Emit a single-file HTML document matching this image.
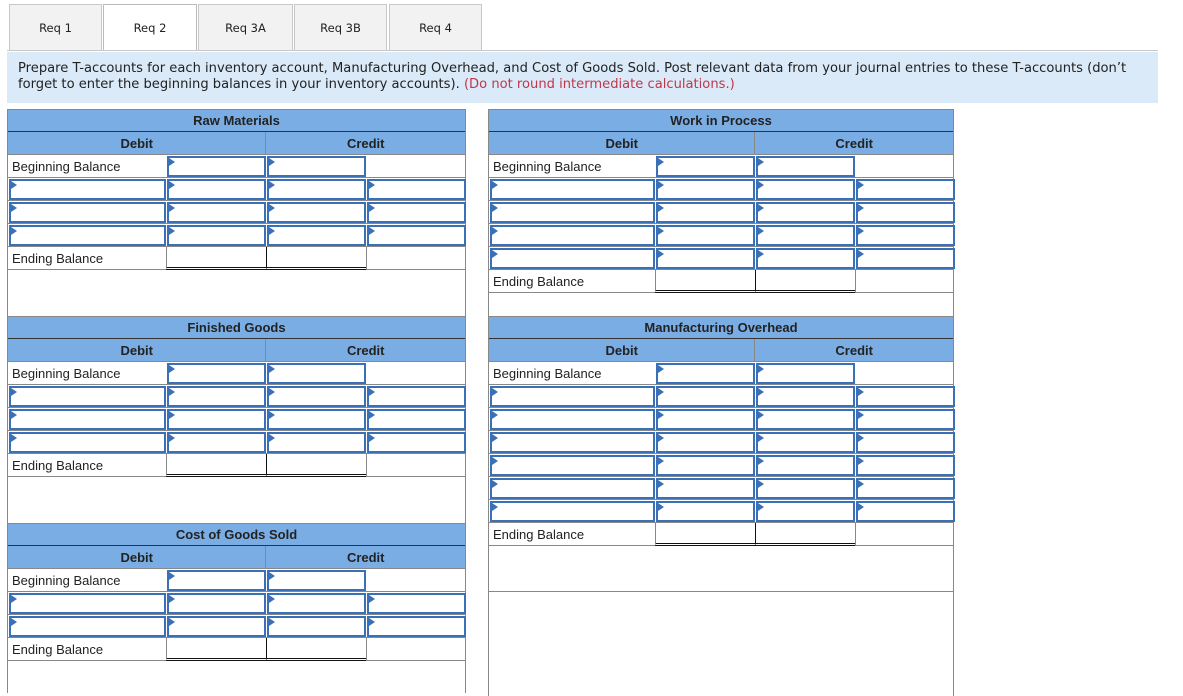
<!DOCTYPE html>
<html><head><meta charset="utf-8"><style>
*{box-sizing:border-box;margin:0;padding:0}
body{width:1183px;height:683px;background:#fff;position:relative;overflow:hidden;font-family:"Liberation Sans",Arial,sans-serif;color:#222}
.tab{position:absolute;top:4px;height:47px;background:#f2f2f2;border:1px solid #c8c8c8;border-bottom:none;font-family:"DejaVu Sans",Verdana,sans-serif;font-size:11.5px;text-align:center;line-height:46px;color:#222}
.tab.act{background:#fff;border-color:#bbb}
.tabline{position:absolute;left:7px;top:50px;width:1151px;height:1px;background:#c8c8c8}
.instr{position:absolute;left:7px;top:52px;width:1151px;height:51px;background:#dbeaf8;font-family:"DejaVu Sans",Verdana,sans-serif;font-size:13.1px;line-height:16px;padding:9px 11px;color:#222;white-space:nowrap}
.instr span{color:#c0374a}
.p{position:absolute;border-left:1px solid #888;border-right:1px solid #888}
.r{display:flex;height:23px;border-bottom:1px solid #888;position:relative}
.h{background:#7aade4;font-weight:bold;font-size:13px;justify-content:center;align-items:center;border-bottom:1px solid #333;border-top:1px solid #888}
.dc{background:#7aade4;font-size:13px;font-weight:bold}
.dc div{display:flex;align-items:center;justify-content:center}
.c{flex:none;height:23px;position:relative}
.lbl{font-size:13px;line-height:24px;padding-left:4px}
.in{border:2px solid #3a70b8;background:#fff;margin:1px 0 0 1px;height:21px}
.in:before{content:"";position:absolute;left:0;top:0;border-left:6px solid #3a70b8;border-top:4px solid transparent;border-bottom:4px solid transparent}
.e{border-left:1px solid #888;border-bottom:3px double #111}
.eb{border-left:1px solid #111}
</style></head><body>
<div class="tab" style="left:9px;width:93px">Req 1</div>
<div class="tab act" style="left:103px;width:94px">Req 2</div>
<div class="tab" style="left:198px;width:95px">Req 3A</div>
<div class="tab" style="left:294px;width:93px">Req 3B</div>
<div class="tab" style="left:389px;width:93px">Req 4</div>
<div class="tabline"></div>
<div class="instr">Prepare T-accounts for each inventory account, Manufacturing Overhead, and Cost of Goods Sold. Post relevant data from your journal entries to these T-accounts (don’t<br>forget to enter the beginning balances in your inventory accounts). <span>(Do not round intermediate calculations.)</span></div>

<!-- Raw Materials -->
<div class="p" style="left:7px;top:109px;width:459px;height:207px">
<div class="r h">Raw Materials</div>
<div class="r dc"><div style="width:258px">Debit</div><div style="width:200px;border-left:1px solid #888">Credit</div></div>
<div class="r"><div class="c lbl" style="width:158px">Beginning Balance</div><div class="c in" style="width:99px"></div><div class="c in" style="width:99px"></div></div>
<div class="r"><div class="c in" style="width:157px"></div><div class="c in" style="width:99px"></div><div class="c in" style="width:99px"></div><div class="c in" style="width:99px"></div></div>
<div class="r"><div class="c in" style="width:157px"></div><div class="c in" style="width:99px"></div><div class="c in" style="width:99px"></div><div class="c in" style="width:99px"></div></div>
<div class="r"><div class="c in" style="width:157px"></div><div class="c in" style="width:99px"></div><div class="c in" style="width:99px"></div><div class="c in" style="width:99px"></div></div>
<div class="r"><div class="c lbl" style="width:158px">Ending Balance</div><div class="c e" style="width:100px"></div><div class="c e eb" style="width:100px"></div><div class="c" style="width:100px;border-left:1px solid #888"></div></div>
</div>

<!-- Finished Goods -->
<div class="p" style="left:7px;top:316px;width:459px;height:207px">
<div class="r h">Finished Goods</div>
<div class="r dc"><div style="width:258px">Debit</div><div style="width:200px;border-left:1px solid #888">Credit</div></div>
<div class="r"><div class="c lbl" style="width:158px">Beginning Balance</div><div class="c in" style="width:99px"></div><div class="c in" style="width:99px"></div></div>
<div class="r"><div class="c in" style="width:157px"></div><div class="c in" style="width:99px"></div><div class="c in" style="width:99px"></div><div class="c in" style="width:99px"></div></div>
<div class="r"><div class="c in" style="width:157px"></div><div class="c in" style="width:99px"></div><div class="c in" style="width:99px"></div><div class="c in" style="width:99px"></div></div>
<div class="r"><div class="c in" style="width:157px"></div><div class="c in" style="width:99px"></div><div class="c in" style="width:99px"></div><div class="c in" style="width:99px"></div></div>
<div class="r"><div class="c lbl" style="width:158px">Ending Balance</div><div class="c e" style="width:100px"></div><div class="c e eb" style="width:100px"></div><div class="c" style="width:100px;border-left:1px solid #888"></div></div>
</div>

<!-- COGS -->
<div class="p" style="left:7px;top:523px;width:459px;height:170px">
<div class="r h">Cost of Goods Sold</div>
<div class="r dc"><div style="width:258px">Debit</div><div style="width:200px;border-left:1px solid #888">Credit</div></div>
<div class="r"><div class="c lbl" style="width:158px">Beginning Balance</div><div class="c in" style="width:99px"></div><div class="c in" style="width:99px"></div></div>
<div class="r"><div class="c in" style="width:157px"></div><div class="c in" style="width:99px"></div><div class="c in" style="width:99px"></div><div class="c in" style="width:99px"></div></div>
<div class="r"><div class="c in" style="width:157px"></div><div class="c in" style="width:99px"></div><div class="c in" style="width:99px"></div><div class="c in" style="width:99px"></div></div>
<div class="r"><div class="c lbl" style="width:158px">Ending Balance</div><div class="c e" style="width:100px"></div><div class="c e eb" style="width:100px"></div><div class="c" style="width:100px;border-left:1px solid #888"></div></div>
</div>

<!-- WIP -->
<div class="p" style="left:488px;top:109px;width:466px;height:207px">
<div class="r h">Work in Process</div>
<div class="r dc"><div style="width:266px">Debit</div><div style="width:199px;border-left:1px solid #888">Credit</div></div>
<div class="r"><div class="c lbl" style="width:166px">Beginning Balance</div><div class="c in" style="width:99px"></div><div class="c in" style="width:99px"></div></div>
<div class="r"><div class="c in" style="width:165px"></div><div class="c in" style="width:99px"></div><div class="c in" style="width:99px"></div><div class="c in" style="width:99px"></div></div>
<div class="r"><div class="c in" style="width:165px"></div><div class="c in" style="width:99px"></div><div class="c in" style="width:99px"></div><div class="c in" style="width:99px"></div></div>
<div class="r"><div class="c in" style="width:165px"></div><div class="c in" style="width:99px"></div><div class="c in" style="width:99px"></div><div class="c in" style="width:99px"></div></div>
<div class="r"><div class="c in" style="width:165px"></div><div class="c in" style="width:99px"></div><div class="c in" style="width:99px"></div><div class="c in" style="width:99px"></div></div>
<div class="r"><div class="c lbl" style="width:166px">Ending Balance</div><div class="c e" style="width:100px"></div><div class="c e eb" style="width:100px"></div><div class="c" style="width:99px;border-left:1px solid #888"></div></div>
</div>

<!-- MOH -->
<div class="p" style="left:488px;top:316px;width:466px;height:380px">
<div class="r h">Manufacturing Overhead</div>
<div class="r dc"><div style="width:266px">Debit</div><div style="width:199px;border-left:1px solid #888">Credit</div></div>
<div class="r"><div class="c lbl" style="width:166px">Beginning Balance</div><div class="c in" style="width:99px"></div><div class="c in" style="width:99px"></div></div>
<div class="r"><div class="c in" style="width:165px"></div><div class="c in" style="width:99px"></div><div class="c in" style="width:99px"></div><div class="c in" style="width:99px"></div></div>
<div class="r"><div class="c in" style="width:165px"></div><div class="c in" style="width:99px"></div><div class="c in" style="width:99px"></div><div class="c in" style="width:99px"></div></div>
<div class="r"><div class="c in" style="width:165px"></div><div class="c in" style="width:99px"></div><div class="c in" style="width:99px"></div><div class="c in" style="width:99px"></div></div>
<div class="r"><div class="c in" style="width:165px"></div><div class="c in" style="width:99px"></div><div class="c in" style="width:99px"></div><div class="c in" style="width:99px"></div></div>
<div class="r"><div class="c in" style="width:165px"></div><div class="c in" style="width:99px"></div><div class="c in" style="width:99px"></div><div class="c in" style="width:99px"></div></div>
<div class="r"><div class="c in" style="width:165px"></div><div class="c in" style="width:99px"></div><div class="c in" style="width:99px"></div><div class="c in" style="width:99px"></div></div>
<div class="r"><div class="c lbl" style="width:166px">Ending Balance</div><div class="c e" style="width:100px"></div><div class="c e eb" style="width:100px"></div><div class="c" style="width:99px;border-left:1px solid #888"></div></div>
<div class="r" style="height:46px"></div>
</div>
</body></html>
